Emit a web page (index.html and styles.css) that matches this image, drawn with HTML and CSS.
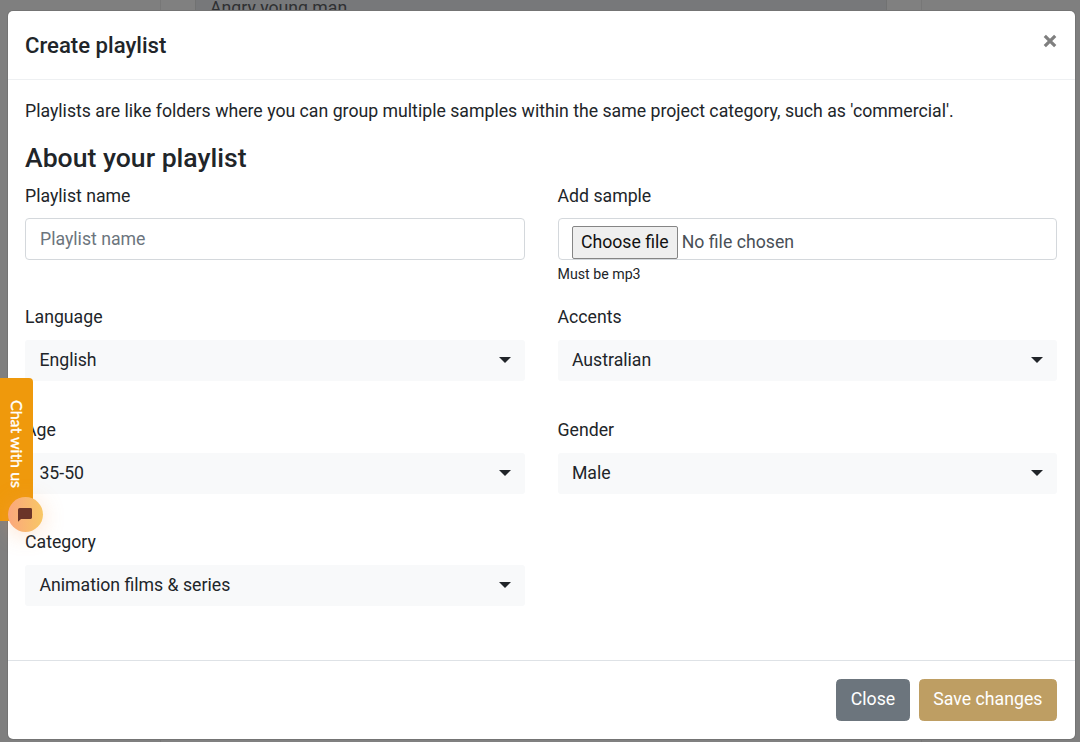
FILE: index.html
```
<!DOCTYPE html>
<html lang="en">
<head>
<meta charset="utf-8">
<title>Create playlist</title>
<link rel="stylesheet" href="styles.css">
</head>
<body>
<div class="backdrop"><div class="page-card"><div class="page-item">Angry young man</div></div></div>
<main class="modal" role="dialog">
  <header class="modal-header">
    <h1 class="modal-title">Create playlist</h1>
    <button class="close" type="button" aria-label="Close"><svg width="14" height="14" viewBox="0 0 14 14"><path d="M1.8 1.8 12.2 12.2M12.2 1.8 1.8 12.2"/></svg></button>
  </header>
  <section class="modal-body">
    <p class="intro">Playlists are like folders where you can group multiple samples within the same project category, such as 'commercial'.</p>
    <h2 class="section-title">About your playlist</h2>
    <form class="fields">
      <div class="field"><label class="label">Playlist name</label><input class="control" type="text" placeholder="Playlist name"></div>
      <div class="field"><label class="label">Add sample</label><div class="control file"><button class="choose" type="button">Choose file</button><span class="file-name">No file chosen</span></div><small class="hint">Must be mp3</small></div>
      <div class="field"><label class="label">Language</label><div class="select"><span>English</span><i class="caret"></i></div></div>
      <div class="field"><label class="label">Accents</label><div class="select"><span>Australian</span><i class="caret"></i></div></div>
      <div class="field"><label class="label">Age</label><div class="select"><span>35-50</span><i class="caret"></i></div></div>
      <div class="field"><label class="label">Gender</label><div class="select"><span>Male</span><i class="caret"></i></div></div>
      <div class="field"><label class="label">Category</label><div class="select"><span>Animation films &amp; series</span><i class="caret"></i></div></div>
    </form>
  </section>
  <footer class="modal-footer">
    <button class="btn btn-close" type="button">Close</button>
    <button class="btn btn-save" type="button">Save changes</button>
  </footer>
</main>
<aside class="chat">
  <div class="chat-tab"><span class="chat-text">Chat with us</span></div>
  <div class="chat-bubble"><svg width="14" height="14" viewBox="0 0 14 14"><path d="M1.8 0H12.6Q14 0 14 1.4V9.6Q14 11 12.6 11H3L0 13.8V1.8Q0 0 1.8 0Z"/></svg></div>
</aside>
</body>
</html>
```
FILE: styles.css
```
* { box-sizing: border-box; }
body {
  margin: 0;
  height: 742px;
  overflow: hidden;
  position: relative;
  padding: 11px 5px 0 8px;
  background: #7f7f7f;
  font: 17.69px/26.6px Roboto, sans-serif;
  color: #212529;
}
button, input { font: inherit; }
h1, h2, p { margin: 0; font-weight: 500; }
.backdrop { position: absolute; inset: 0; padding: 0 158px 0 160px; }
.page-card {
  height: 100%;
  padding: 0 34px;
  border: solid #777;
  border-width: 0 1px;
  background: #808080;
}
.page-item {
  height: 40px;
  padding-left: 14px;
  border: solid #717272;
  border-width: 0 1px;
  background: #77787a;
  line-height: 16px;
  color: #2f3032;
}
.modal {
  position: relative;
  height: 728px;
  display: flex;
  flex-direction: column;
  background: #fff;
  border-radius: 5px;
  box-shadow: 0 0 0 1px #747474;
}
.modal-header {
  height: 69px;
  flex: none;
  display: flex;
  justify-content: space-between;
  padding: 18px 18px 0 17px;
  border-bottom: 1px solid #eef0f2;
}
.modal-title { font-size: 22.15px; line-height: 33px; }
.close { height: 14px; width: 14px; margin-top: 5px; padding: 0; border: 0; background: none; display: flex; }
.close path { stroke: #7f7f7f; stroke-width: 3.2; }
.modal-body { flex: 1; padding: 18px 18px 0 17px; }
.intro { font-weight: 400; }
.section-title { margin-top: 17px; font-size: 26.6px; line-height: 32px; }
.fields {
  display: grid;
  grid-template-columns: 1fr 1fr;
  grid-template-rows: 121px 113px 112px auto;
  column-gap: 33px;
  margin-top: 9px;
}
.label { display: block; height: 26px; margin-bottom: 9px; }
.control {
  display: block;
  width: 100%;
  height: 42px;
  padding: 0 14px;
  border: 1px solid #d4d8dc;
  border-radius: 4px;
  background: #fff;
}
.control::placeholder { color: #6c757d; opacity: 1; }
.file { display: flex; align-items: flex-start; padding: 7px 13.4px 0; overflow: hidden; }
.choose {
  height: 33px;
  padding: 0 8px;
  border: 1px solid #858585;
  border-radius: 2px;
  background: #efefef;
  color: #111;
}
.file-name { margin-left: 4px; line-height: 33px; color: #495057; }
.hint { display: block; margin-top: 4px; font-size: 14.2px; line-height: 21px; }
.select {
  height: 41px;
  margin-top: 10px;
  padding: 0 14px 0 14.4px;
  display: flex;
  align-items: center;
  justify-content: space-between;
  border-radius: 3px;
  background: #f8f9fa;
}
.caret { border: solid transparent; border-width: 6px 6px 0; border-top-color: #212529; }
.modal-footer {
  height: 79px;
  flex: none;
  display: flex;
  align-items: flex-start;
  justify-content: flex-end;
  gap: 9px;
  padding: 18px 18px 0;
  border-top: 1px solid #dee2e6;
}
.btn { height: 42px; padding: 0 13.6px 2px; border: 1px solid; border-radius: 4.5px; color: #fff; }
.btn-close { background: #6c757d; border-color: #6c757d; }
.btn-save { background: #be9e63; border-color: #be9e63; }
.chat { position: absolute; left: 0; top: 378px; width: 43px; }
.chat-tab {
  width: 33px;
  height: 143px;
  padding: 22px 0 0 1px;
  background: #ef990c;
  border-radius: 0 4px 4px 0;
}
.chat-text { display: block; writing-mode: vertical-rl; font: 16px/32px Lato, sans-serif; color: #fff; -webkit-text-stroke: .35px #fff; }
.chat-bubble {
  position: absolute;
  left: 8px;
  top: 119px;
  width: 35px;
  height: 35px;
  display: flex;
  align-items: center;
  justify-content: center;
  border-radius: 50%;
  background: linear-gradient(90deg, #fba77d, #f8c765);
  box-shadow: 0 3px 22px rgba(250, 155, 90, .3);
}
.chat-bubble svg { margin-right: 1px; }
.chat-bubble path { fill: #6b3428; }
```
